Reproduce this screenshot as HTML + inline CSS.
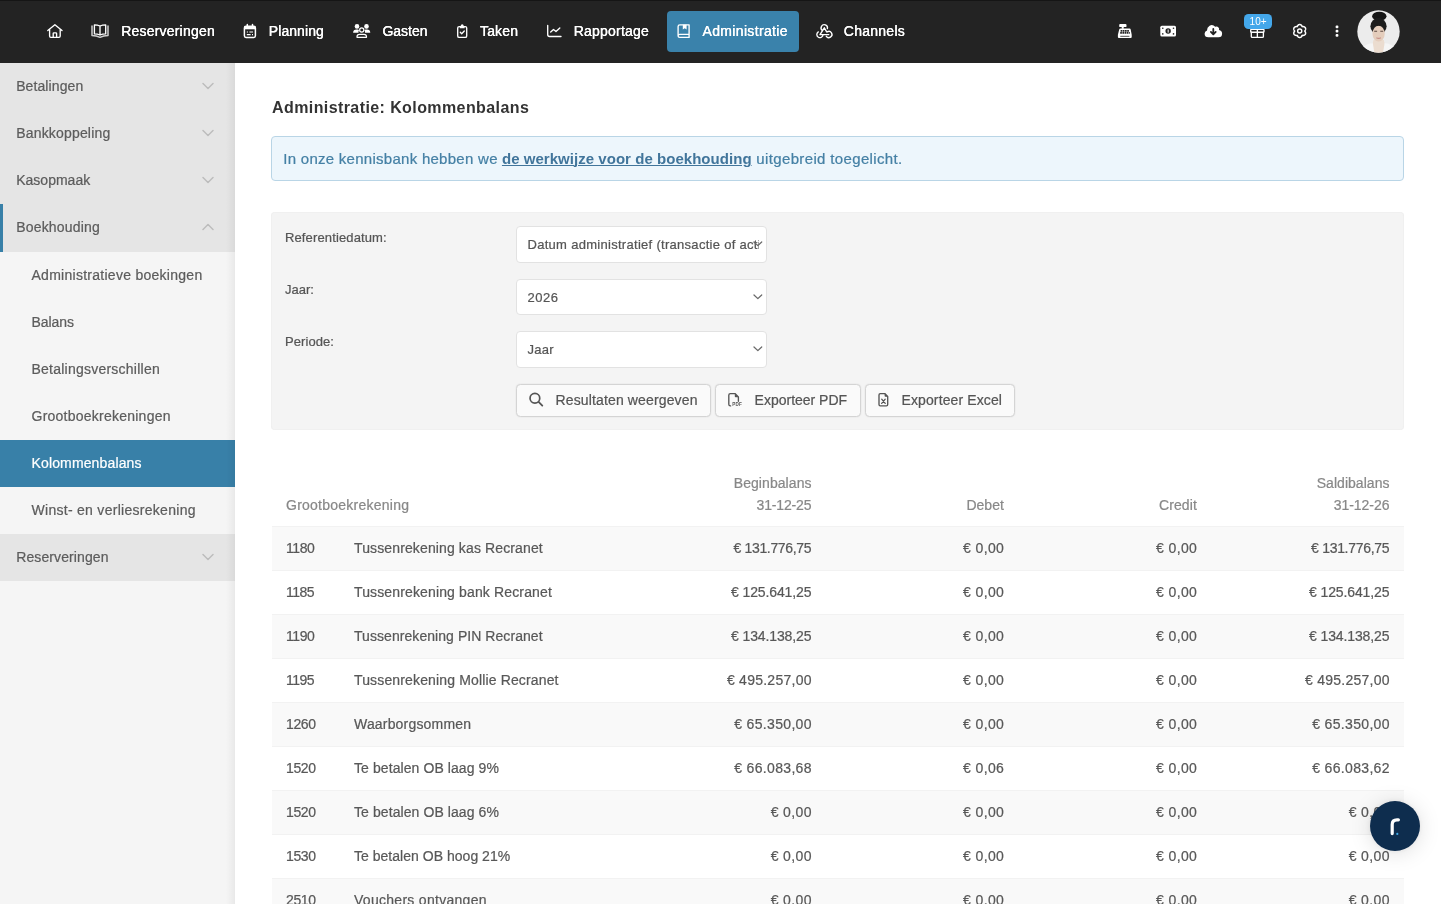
<!DOCTYPE html>
<html lang="nl"><head><meta charset="utf-8"><title>Administratie: Kolommenbalans</title>
<style>
*{box-sizing:border-box}
html,body{margin:0;padding:0}
body{width:1441px;height:904px;overflow:hidden;background:#fff;font-family:"Liberation Sans",sans-serif;font-size:14px;color:#555;position:relative;-webkit-text-stroke:.22px}
#wrap{position:absolute;left:0;top:0;width:1441px;height:904px;overflow:hidden;will-change:transform}
a{color:inherit}
.abs{position:absolute}
/* top bar */
#top{position:absolute;left:0;top:0;width:1441px;height:62.5px;background:#232323;box-shadow:inset 0 1px 0 #151515;z-index:5}
#top .ni{position:absolute;top:0;height:62.5px;line-height:63.5px;color:#fff;font-size:14px;white-space:nowrap;text-shadow:0 0 .4px #fff}
#top svg{position:absolute;overflow:visible}
#top .btn{position:absolute;left:667px;top:10.5px;width:131.5px;height:41.5px;border-radius:4px;background:#3a82ab}
/* sidebar */
#side{position:absolute;left:0;top:62.5px;width:235px;height:841.5px;background:#f5f5f5;overflow:hidden}
#side:after{content:"";position:absolute;right:0;top:0;width:9px;height:100%;background:linear-gradient(to right,rgba(0,0,0,0),rgba(0,0,0,.05))}
#side ul{list-style:none;margin:0;padding:.45px 0 0;background:linear-gradient(#e5e5e5,#e5e5e5) 0 0/100% 2px no-repeat}
#side li{position:relative;height:47.15px;line-height:47.15px;white-space:nowrap;color:#5c5c5c}
#side li.m{background:#e5e5e5;padding-left:16.2px}
#side li.s{padding-left:31.5px}
#side li.act{background:#3880a8;color:#fff}
#side li.open{border-left:3px solid #3880a8;padding-left:13.2px}
#side li svg{position:absolute;left:201.8px;top:18.8px}
#side li.open svg{left:198.8px;top:18.3px}
/* main */
#main{display:block}
h1{position:absolute;left:272px;top:95.8px;margin:0;font-size:16px;line-height:24px;font-weight:700;color:#333;white-space:nowrap;-webkit-text-stroke:0}
#alert{position:absolute;left:271.1px;top:136px;width:1133px;height:45px;border:1px solid #b9d5e6;border-radius:4px;background:#edf6fc;color:#4580a5;font-size:15px;line-height:43px;padding-left:11.2px;white-space:nowrap}
#alert a{-webkit-text-stroke:0;color:#41759b;font-weight:700;text-decoration:underline;text-decoration-thickness:1.1px;text-underline-offset:1px}
#filter{position:absolute;left:271.1px;top:212px;width:1133px;height:217.5px;border-radius:4px;background:#f4f4f4;box-shadow:inset 0 0 0 1px #f0f0f0}
#filter label{position:absolute;left:13.9px;font-size:13px;line-height:20px;color:#555;white-space:nowrap}
.sel{position:absolute;left:244.9px;width:251.5px;height:36.5px;border:1px solid #e2e2e2;border-radius:4px;background:#fff;font-size:13px;line-height:36px;padding-left:10.5px;color:#555;white-space:nowrap;overflow:hidden}
.sel svg{position:absolute;right:3.6px;top:14.4px}
.sel .clip{display:inline-block;overflow:hidden;width:231.5px;height:34px;vertical-align:top}
.bt{position:absolute;top:171.5px;height:33px;border:1px solid #d4d4d4;border-radius:4.5px;background:#fafafa;box-shadow:0 0 1.5px rgba(0,0,0,.12);font-size:14px;line-height:31px;color:#555;white-space:nowrap}
.bt svg{position:absolute;overflow:visible}
.bt span.t{position:absolute;top:0}
/* table */
#tbl{position:absolute;left:272px;top:460px;width:1132px;border-collapse:collapse;table-layout:fixed}
#tbl th{font-weight:400;color:#888;text-align:right;vertical-align:bottom;line-height:22px;padding:0 14.5px 9.8px 14px;height:66px;white-space:nowrap}
#tbl th:first-child{text-align:left}
#tbl td{height:44px;line-height:42.4px;padding:.6px 14.5px 0 14px;text-align:right;border-top:1px solid #f2f2f2;white-space:nowrap;color:#585858}
#tbl td:first-child,#tbl td:nth-child(2){text-align:left}
#tbl td:nth-child(2){padding-left:0}
#tbl tr:nth-child(odd) td{background:#f9f9f9}
#chat{position:absolute;left:1369.7px;top:800.7px;width:50.5px;height:50.5px;border-radius:50%;background:#0e2d4e;box-shadow:0 2px 22px rgba(0,0,0,.13),0 0 5px rgba(0,0,0,.07);z-index:9}
</style></head>
<body>
<div id="wrap">
<nav id="top"><div class="btn"></div><div class="ni" style="left:121.2px"><span style="letter-spacing:0.203px;">Reserveringen</span></div><div class="ni" style="left:268.8px"><span style="letter-spacing:0.071px;">Planning</span></div><div class="ni" style="left:382.5px"><span style="letter-spacing:-0.028px;">Gasten</span></div><div class="ni" style="left:480px"><span style="letter-spacing:0.16px;">Taken</span></div><div class="ni" style="left:573.8px"><span style="letter-spacing:0.203px;">Rapportage</span></div><div class="ni" style="left:702.5px"><span style="letter-spacing:0.34px;">Administratie</span></div><div class="ni" style="left:843.8px"><span style="letter-spacing:0.263px;">Channels</span></div><svg width="1441" height="62.5" viewBox="0 0 1441 62.5" style="left:0;top:0">
<!-- home -->
<g fill="none" stroke="#fff" stroke-width="1.35" stroke-linecap="round" stroke-linejoin="round"><path d="M47.8 30.6 L54.9 24.7 L62 30.6"/><path d="M49.6 29.6 V36 Q49.6 37.3 50.9 37.3 H58.9 Q60.2 37.3 60.2 36 V29.6"/><path d="M53.2 37.2 V33.6 Q53.2 32.9 53.9 32.9 H55.9 Q56.6 32.9 56.6 33.6 V37.2"/></g>
<!-- book open -->
<g fill="none" stroke-linejoin="round" stroke-linecap="round"><path d="M92 26 V35.4 Q96.5 35.6 100 37.3 Q103.500 35.6 108 35.400 V26" stroke="#cfcfcf" stroke-width="1.5"/><path d="M94.400 24.900 Q97.500 24.900 100 26 Q102.500 24.900 105.700 24.900 V33.900 Q102.500 33.900 100 35 Q97.500 33.900 94.400 33.900 Z M100 26 V35" stroke="#fff" stroke-width="1.35"/></g>
<!-- calendar -->
<g><rect x="244.400" y="26.300" width="11" height="11.100" rx="1.600" fill="none" stroke="#fff" stroke-width="1.500"/><rect x="244.400" y="26.300" width="11" height="3" fill="#fff"/><path d="M247.300 24.400 V27 M252.500 24.400 V27" stroke="#fff" stroke-width="1.500" stroke-linecap="round"/><path d="M246.800 32 H248 M249.400 32 H253 M246.800 34.600 H250.600 M252 34.600 H253" stroke="#fff" stroke-width="1.200"/></g>
<!-- users -->
<g><circle cx="357" cy="26.400" r="2.300" fill="#fff"/><circle cx="366.500" cy="26.400" r="2.300" fill="#fff"/><path d="M353.100 32.700 Q353.300 29.600 356.400 29.600 H357.600 Q358.700 29.600 359 30.300 Q358.200 31.400 358.500 32.700 Z" fill="#fff"/><path d="M370.300 32.700 Q370.100 29.600 367 29.600 H365.900 Q364.800 29.600 364.500 30.300 Q365.300 31.400 365 32.700 Z" fill="#fff"/><circle cx="361.750" cy="30" r="2.100" fill="none" stroke="#fff" stroke-width="1.200"/><path d="M357 37.300 V36.700 Q357 34.300 359.500 34.300 H364 Q366.500 34.300 366.500 36.700 V37.300 Z" fill="none" stroke="#fff" stroke-width="1.200" stroke-linejoin="round"/></g>
<!-- clipboard check -->
<g fill="none" stroke="#fff" stroke-width="1.35" stroke-linecap="round" stroke-linejoin="round"><rect x="457.700" y="26.600" width="9" height="10.800" rx="1.500"/><path d="M460.300 32.300 L461.700 33.700 L464.300 31"/></g><path d="M459.800 26 H460.600 Q460.900 24.300 462.200 24.300 Q463.500 24.300 463.800 26 H464.600 V28.300 H459.800 Z" fill="#fff"/>
<!-- chart line -->
<g fill="none" stroke="#fff" stroke-width="1.35" stroke-linecap="round" stroke-linejoin="round"><path d="M547.700 25.400 V34.600 Q547.700 36.500 549.600 36.500 H561"/><path d="M550.700 32 L553.500 29.400 L556 31.500 L559.800 27.900"/></g>
<!-- book bookmark (admin) -->
<g fill="none" stroke="#fff" stroke-width="1.35" stroke-linecap="round" stroke-linejoin="round"><path d="M678.100 35.600 V26.600 Q678.100 24.800 679.900 24.800 H689.100 V34.400 H679.700 Q678.100 34.400 678.100 36 Q678.100 37.400 679.700 37.400 H689.100 V34.400"/></g><path d="M682.800 24.800 H686.600 V29.600 L684.700 28.300 L682.800 29.600 Z" fill="#fff"/>
<!-- webhook -->
<g fill="none" stroke="#fff" stroke-width="1.35" stroke-linecap="round" stroke-linejoin="round"><path d="M822.300 30.400 A3.200 3.200 0 1 1 827.400 28.600"/><path d="M823 34.600 A3.100 3.100 0 1 1 818.300 31.900"/><path d="M827.200 31.900 A3.100 3.100 0 1 1 826.200 36.200"/><path d="M824.300 27.800 L820 34.600 H828.800 M824.300 27.800 L826.700 31.800"/></g>
<!-- cash register -->
<g><rect x="1119.200" y="24.100" width="7.300" height="3" rx="0.900" fill="#fff"/><rect x="1121.700" y="26.800" width="2" height="2" fill="#fff"/><path d="M1120.300 28.500 H1129.600 Q1130.500 28.500 1130.700 29.400 L1131.700 34.800 V37 Q1131.700 38 1130.700 38 H1118.900 Q1117.900 38 1117.900 37 V34.800 L1119.200 29.400 Q1119.400 28.500 1120.300 28.500Z" fill="#fff"/><path d="M1120.600 30.900 H1129.400 M1120.200 32.900 H1129.800" stroke="#232323" stroke-width="1.600" stroke-dasharray="1.700 0.500"/><path d="M1120.300 36.300 H1129.400" stroke="#232323" stroke-width="0.800"/></g>
<!-- money bill -->
<g><rect x="1160.300" y="25.700" width="15.700" height="10.700" rx="1.500" fill="#fff"/><circle cx="1168.150" cy="31.050" r="2.700" fill="#232323"/><rect x="1167.650" y="29.500" width="1" height="3.100" fill="#fff"/><circle cx="1162.800" cy="28.200" r="0.800" fill="#232323"/><circle cx="1173.500" cy="28.200" r="0.800" fill="#232323"/><circle cx="1162.800" cy="33.900" r="0.800" fill="#232323"/><circle cx="1173.500" cy="33.900" r="0.800" fill="#232323"/></g>
<!-- cloud download -->
<g><path d="M1208.400 37.200 Q1204.600 37.200 1204.600 33.700 Q1204.600 31.200 1207 30.400 Q1206.900 27.300 1209.600 25.700 Q1212.700 24 1215.200 26.800 Q1217.800 25.500 1219 28.300 Q1219.300 29.100 1219 30.100 Q1222.100 30.700 1222.100 33.700 Q1222.100 37.200 1218.500 37.200 Z" fill="#fff"/><path d="M1213.300 29 V33.600 M1210.900 31.900 L1213.300 34.300 L1215.700 31.900" fill="none" stroke="#232323" stroke-width="1.800" stroke-linecap="round" stroke-linejoin="round"/></g>
<!-- gift -->
<g fill="none" stroke="#fff" stroke-width="1.35" stroke-linecap="round" stroke-linejoin="round"><path d="M1251.300 32.200 V36.500 Q1251.300 37.400 1252.200 37.400 H1262.500 Q1263.400 37.400 1263.400 36.500 V32.200"/><rect x="1250.700" y="29.300" width="13.300" height="2.900" rx="0.700"/><path d="M1257.350 29.300 V37.400"/></g>
<!-- gear -->
<path d="M1304.75 31.00 L1304.93 30.73 L1305.12 30.43 L1305.29 30.11 L1305.43 29.78 L1305.53 29.44 L1305.60 29.08 L1305.61 28.73 L1305.57 28.39 L1305.47 28.06 L1305.33 27.75 L1305.13 27.47 L1304.90 27.23 L1304.62 27.02 L1304.31 26.85 L1303.97 26.73 L1303.62 26.65 L1303.26 26.60 L1302.90 26.59 L1302.55 26.61 L1302.23 26.63 L1302.08 26.33 L1301.92 26.02 L1301.73 25.72 L1301.51 25.43 L1301.26 25.17 L1300.99 24.94 L1300.69 24.75 L1300.37 24.61 L1300.04 24.53 L1299.70 24.50 L1299.36 24.53 L1299.03 24.61 L1298.71 24.75 L1298.41 24.94 L1298.14 25.17 L1297.89 25.43 L1297.67 25.72 L1297.48 26.02 L1297.32 26.33 L1297.17 26.63 L1296.85 26.61 L1296.50 26.59 L1296.14 26.60 L1295.78 26.65 L1295.43 26.73 L1295.09 26.85 L1294.78 27.02 L1294.50 27.23 L1294.27 27.47 L1294.07 27.75 L1293.93 28.06 L1293.83 28.39 L1293.79 28.73 L1293.80 29.08 L1293.87 29.44 L1293.97 29.78 L1294.11 30.11 L1294.28 30.43 L1294.47 30.73 L1294.65 31.00 L1294.47 31.27 L1294.28 31.57 L1294.11 31.89 L1293.97 32.22 L1293.87 32.56 L1293.80 32.92 L1293.79 33.27 L1293.83 33.61 L1293.93 33.94 L1294.07 34.25 L1294.27 34.53 L1294.50 34.77 L1294.78 34.98 L1295.09 35.15 L1295.43 35.27 L1295.78 35.35 L1296.14 35.40 L1296.50 35.41 L1296.85 35.39 L1297.17 35.37 L1297.32 35.67 L1297.48 35.98 L1297.67 36.28 L1297.89 36.57 L1298.14 36.83 L1298.41 37.06 L1298.71 37.25 L1299.03 37.39 L1299.36 37.47 L1299.70 37.50 L1300.04 37.47 L1300.37 37.39 L1300.69 37.25 L1300.99 37.06 L1301.26 36.83 L1301.51 36.57 L1301.73 36.28 L1301.92 35.98 L1302.08 35.67 L1302.23 35.37 L1302.55 35.39 L1302.90 35.41 L1303.26 35.40 L1303.62 35.35 L1303.97 35.27 L1304.31 35.15 L1304.62 34.98 L1304.90 34.77 L1305.13 34.53 L1305.33 34.25 L1305.47 33.94 L1305.57 33.61 L1305.61 33.27 L1305.60 32.92 L1305.53 32.56 L1305.43 32.22 L1305.29 31.89 L1305.12 31.57 L1304.93 31.27Z" fill="none" stroke="#fff" stroke-width="1.5" stroke-linejoin="round"/><circle cx="1299.7" cy="31" r="2.05" fill="none" stroke="#fff" stroke-width="1.45"/>
<!-- dots -->
<rect x="1335.600" y="25.500" width="2.800" height="2.800" rx="1" fill="#fff"/><rect x="1335.600" y="29.700" width="2.800" height="2.800" rx="1" fill="#fff"/><rect x="1335.600" y="33.900" width="2.800" height="2.800" rx="1" fill="#fff"/>
</svg><svg width="43" height="43" viewBox="0 0 43 43" style="left:1356.700px;top:9.700px">
<defs><clipPath id="avc"><circle cx="21.500" cy="21.500" r="21.200"/></clipPath><filter id="avb" x="-20%" y="-20%" width="140%" height="140%"><feGaussianBlur stdDeviation="0.600"/></filter></defs>
<circle cx="21.500" cy="21.500" r="21.200" fill="#ececec"/>
<g clip-path="url(#avc)" filter="url(#avb)">
<path d="M16.500 30 L13.200 45 H30.200 L26.800 30 Z" fill="#ebdccf"/>
<path d="M1 46 Q3 35.500 13 33.600 L15.800 33.200 L17.800 45 Z" fill="#f5f5f5"/>
<path d="M42 46 Q40 35.500 30.500 33.600 L27.600 33.200 L25.600 45 Z" fill="#f5f5f5"/>
<ellipse cx="22.300" cy="6.300" rx="7.200" ry="4.500" fill="#171717"/>
<ellipse cx="21.500" cy="16.200" rx="8.100" ry="8.200" fill="#1c1c1c"/>
<ellipse cx="21.600" cy="23.700" rx="6.100" ry="7.900" fill="#e4cdbc"/>
<path d="M14.300 18 Q16.500 11.800 22 12.200 Q27.500 12.500 29 18.500 Q25.500 15.200 21.800 15.600 Q17.500 15.400 14.300 18Z" fill="#1c1c1c"/>
<path d="M17.200 21.300 h2.900 M23.300 21.300 h2.900" stroke="#5d4b42" stroke-width="1.100"/>
<path d="M19.400 27.700 Q21.600 29 23.900 27.700" stroke="#c58f86" stroke-width="1.100" fill="none"/>
</g></svg><div style="position:absolute;left:1243.800px;top:14.100px;width:28.600px;height:14.900px;border-radius:4.500px;background:#44a7ea;color:#fff;font-size:10px;line-height:15.800px;text-align:center;letter-spacing:0;-webkit-text-stroke:0">10+</div></nav>
<aside id="side"><ul><li class="m"><span style="letter-spacing:0.092px;">Betalingen</span><svg width="12" height="8" viewBox="0 0 12 8"><path d="M1 1.5 L6 6.5 L11 1.5" fill="none" stroke="#bcbcbc" stroke-width="1.45" stroke-linecap="round" stroke-linejoin="round"/></svg></li><li class="m"><span style="letter-spacing:0.178px;">Bankkoppeling</span><svg width="12" height="8" viewBox="0 0 12 8"><path d="M1 1.5 L6 6.5 L11 1.5" fill="none" stroke="#bcbcbc" stroke-width="1.45" stroke-linecap="round" stroke-linejoin="round"/></svg></li><li class="m"><span style="letter-spacing:0.008px;">Kasopmaak</span><svg width="12" height="8" viewBox="0 0 12 8"><path d="M1 1.5 L6 6.5 L11 1.5" fill="none" stroke="#bcbcbc" stroke-width="1.45" stroke-linecap="round" stroke-linejoin="round"/></svg></li><li class="m open"><span style="letter-spacing:0.185px;">Boekhouding</span><svg width="12" height="8" viewBox="0 0 12 8"><path d="M1 6.5 L6 1.5 L11 6.5" fill="none" stroke="#bcbcbc" stroke-width="1.45" stroke-linecap="round" stroke-linejoin="round"/></svg></li><li class="s"><span style="letter-spacing:0.27px;">Administratieve boekingen</span></li><li class="s"><span style="letter-spacing:-0.062px;">Balans</span></li><li class="s"><span style="letter-spacing:0.235px;">Betalingsverschillen</span></li><li class="s"><span style="letter-spacing:0.241px;">Grootboekrekeningen</span></li><li class="s act"><span style="letter-spacing:0.141px;">Kolommenbalans</span></li><li class="s"><span style="letter-spacing:0.285px;">Winst- en verliesrekening</span></li><li class="m"><span style="letter-spacing:0.103px;">Reserveringen</span><svg width="12" height="8" viewBox="0 0 12 8"><path d="M1 1.5 L6 6.5 L11 1.5" fill="none" stroke="#bcbcbc" stroke-width="1.45" stroke-linecap="round" stroke-linejoin="round"/></svg></li></ul></aside>
<main id="main">
<h1><span style="letter-spacing:0.408px;">Administratie: Kolommenbalans</span></h1><div id="alert"><span style="letter-spacing:0.273px;">In onze kennisbank hebben we</span><a style="margin-left:4.2px;display:inline-block"><span style="letter-spacing:0.04px;margin-right:-0.04px;">de werkwijze voor de boekhouding</span></a><span style="margin-left:4.8px"><span style="letter-spacing:0.355px;">uitgebreid toegelicht.</span></span></div>
<section id="filter"><label style="top:15.8px"><span style="letter-spacing:0.131px;">Referentiedatum:</span></label><label style="top:68.1px"><span style="letter-spacing:0.023px;">Jaar:</span></label><label style="top:120.3px"><span style="letter-spacing:0.083px;">Periode:</span></label><div class="sel" style="top:14px"><span class="clip"><span style="letter-spacing:0px;letter-spacing:.29px">Datum administratief (transactie of actie)</span></span><svg width="10" height="6" viewBox="0 0 10 6"><path d="M1 1 L4.85 4.6 L8.7 1" fill="none" stroke="#6a6a6a" stroke-width="1.3" stroke-linecap="round" stroke-linejoin="round"/></svg></div><div class="sel" style="top:66.5px"><span style="letter-spacing:0.526px;">2026</span><svg width="10" height="6" viewBox="0 0 10 6"><path d="M1 1 L4.85 4.6 L8.7 1" fill="none" stroke="#6a6a6a" stroke-width="1.3" stroke-linecap="round" stroke-linejoin="round"/></svg></div><div class="sel" style="top:119px"><span style="letter-spacing:0.234px;">Jaar</span><svg width="10" height="6" viewBox="0 0 10 6"><path d="M1 1 L4.85 4.6 L8.7 1" fill="none" stroke="#6a6a6a" stroke-width="1.3" stroke-linecap="round" stroke-linejoin="round"/></svg></div><div class="bt" style="left:244.9px;width:195.2px"><span class="t" style="left:38.5px"><span style="letter-spacing:0.141px;">Resultaten weergeven</span></span></div><div class="bt" style="left:444px;width:145.6px"><span class="t" style="left:38.5px"><span style="letter-spacing:-0.008px;">Exporteer PDF</span></span></div><div class="bt" style="left:593.6px;width:150px"><span class="t" style="left:35.8px"><span style="letter-spacing:0.119px;">Exporteer Excel</span></span></div><svg width="1441" height="904" viewBox="0 0 1441 904" style="position:absolute;left:-271.100px;top:-212px;pointer-events:none">
<g fill="none" stroke="#555" stroke-linecap="round" stroke-linejoin="round">
<circle cx="534.900" cy="398.200" r="4.850" stroke-width="1.700"/><path d="M538.600 401.900 L542.300 405.600" stroke-width="1.800"/>
<path d="M730.600 405.900 H730.400 Q728.800 405.900 728.800 404.300 V395.200 Q728.800 393.600 730.400 393.600 H735 L738.400 397 V401.300" stroke-width="1.350"/>
<path d="M879 394.900 Q879 393.600 880.300 393.600 H884.800 L887.700 396.500 V404.600 Q887.700 405.900 886.400 405.900 H880.300 Q879 405.900 879 404.600 Z" stroke-width="1.350"/>
<path d="M881.700 399.200 L885.200 403.400 M885.200 399.200 L881.700 403.400" stroke-width="1.300"/>
</g>
<path d="M734.800 393.400 L738.600 397.200 H735.600 Q734.800 397.200 734.800 396.400 Z" fill="#555"/>
<path d="M884.600 393.400 L887.900 396.700 H885.400 Q884.600 396.700 884.600 395.900 Z" fill="#555"/>
<text x="732.300" y="406" font-family="Liberation Sans, sans-serif" font-size="4.600" font-weight="700" fill="#555" letter-spacing="0.200">PDF</text>
</svg></section>
<table id="tbl"><colgroup><col style="width:82px"><col style="width:287px"><col style="width:185px"><col style="width:192.400px"><col style="width:193px"><col style="width:192.600px"></colgroup><thead><tr><th colspan="2"><span style="letter-spacing:0.245px;">Grootboekrekening</span></th><th><span style="letter-spacing:0.069px;margin-right:-0.069px;">Beginbalans</span><br><span style="letter-spacing:-0.15px;margin-right:0.15px;">31-12-25</span></th><th><span style="letter-spacing:0.035px;margin-right:-0.035px;">Debet</span></th><th><span style="letter-spacing:0.128px;margin-right:-0.128px;">Credit</span></th><th><span style="letter-spacing:0.036px;margin-right:-0.036px;">Saldibalans</span><br><span style="letter-spacing:-0.042px;margin-right:0.042px;">31-12-26</span></th></tr></thead><tbody><tr><td><span style="letter-spacing:-0.436px;">1180</span></td><td><span style="letter-spacing:0.126px;">Tussenrekening kas Recranet</span></td><td><span style="letter-spacing:-0.341px;margin-right:0.341px;">€ 131.776,75</span></td><td><span style="letter-spacing:0.372px;margin-right:-0.372px;">€ 0,00</span></td><td><span style="letter-spacing:0.372px;margin-right:-0.372px;">€ 0,00</span></td><td><span style="letter-spacing:-0.305px;margin-right:0.305px;">€ 131.776,75</span></td></tr><tr><td><span style="letter-spacing:-0.503px;">1185</span></td><td><span style="letter-spacing:0.139px;">Tussenrekening bank Recranet</span></td><td><span style="letter-spacing:-0.123px;margin-right:0.123px;">€ 125.641,25</span></td><td><span style="letter-spacing:0.372px;margin-right:-0.372px;">€ 0,00</span></td><td><span style="letter-spacing:0.372px;margin-right:-0.372px;">€ 0,00</span></td><td><span style="letter-spacing:-0.123px;margin-right:0.123px;">€ 125.641,25</span></td></tr><tr><td><span style="letter-spacing:-0.436px;">1190</span></td><td><span style="letter-spacing:0.06px;">Tussenrekening PIN Recranet</span></td><td><span style="letter-spacing:-0.123px;margin-right:0.123px;">€ 134.138,25</span></td><td><span style="letter-spacing:0.372px;margin-right:-0.372px;">€ 0,00</span></td><td><span style="letter-spacing:0.372px;margin-right:-0.372px;">€ 0,00</span></td><td><span style="letter-spacing:-0.123px;margin-right:0.123px;">€ 134.138,25</span></td></tr><tr><td><span style="letter-spacing:-0.503px;">1195</span></td><td><span style="letter-spacing:0.147px;">Tussenrekening Mollie Recranet</span></td><td><span style="letter-spacing:0.259px;margin-right:-0.259px;">€ 495.257,00</span></td><td><span style="letter-spacing:0.372px;margin-right:-0.372px;">€ 0,00</span></td><td><span style="letter-spacing:0.372px;margin-right:-0.372px;">€ 0,00</span></td><td><span style="letter-spacing:0.241px;margin-right:-0.241px;">€ 495.257,00</span></td></tr><tr><td><span style="letter-spacing:-0.385px;">1260</span></td><td><span style="letter-spacing:0.181px;">Waarborgsommen</span></td><td><span style="letter-spacing:0.323px;margin-right:-0.323px;">€ 65.350,00</span></td><td><span style="letter-spacing:0.372px;margin-right:-0.372px;">€ 0,00</span></td><td><span style="letter-spacing:0.372px;margin-right:-0.372px;">€ 0,00</span></td><td><span style="letter-spacing:0.323px;margin-right:-0.323px;">€ 65.350,00</span></td></tr><tr><td><span style="letter-spacing:-0.385px;">1520</span></td><td><span style="letter-spacing:0.084px;">Te betalen OB laag 9%</span></td><td><span style="letter-spacing:0.323px;margin-right:-0.323px;">€ 66.083,68</span></td><td><span style="letter-spacing:0.372px;margin-right:-0.372px;">€ 0,06</span></td><td><span style="letter-spacing:0.372px;margin-right:-0.372px;">€ 0,00</span></td><td><span style="letter-spacing:0.323px;margin-right:-0.323px;">€ 66.083,62</span></td></tr><tr><td><span style="letter-spacing:-0.385px;">1520</span></td><td><span style="letter-spacing:0.084px;">Te betalen OB laag 6%</span></td><td><span style="letter-spacing:0.372px;margin-right:-0.372px;">€ 0,00</span></td><td><span style="letter-spacing:0.372px;margin-right:-0.372px;">€ 0,00</span></td><td><span style="letter-spacing:0.372px;margin-right:-0.372px;">€ 0,00</span></td><td><span style="letter-spacing:0.372px;margin-right:-0.372px;">€ 0,00</span></td></tr><tr><td><span style="letter-spacing:-0.385px;">1530</span></td><td><span style="letter-spacing:0.025px;">Te betalen OB hoog 21%</span></td><td><span style="letter-spacing:0.372px;margin-right:-0.372px;">€ 0,00</span></td><td><span style="letter-spacing:0.372px;margin-right:-0.372px;">€ 0,00</span></td><td><span style="letter-spacing:0.372px;margin-right:-0.372px;">€ 0,00</span></td><td><span style="letter-spacing:0.372px;margin-right:-0.372px;">€ 0,00</span></td></tr><tr><td><span style="letter-spacing:-0.385px;">2510</span></td><td><span style="letter-spacing:0.285px;">Vouchers ontvangen</span></td><td><span style="letter-spacing:0.372px;margin-right:-0.372px;">€ 0,00</span></td><td><span style="letter-spacing:0.372px;margin-right:-0.372px;">€ 0,00</span></td><td><span style="letter-spacing:0.372px;margin-right:-0.372px;">€ 0,00</span></td><td><span style="letter-spacing:0.372px;margin-right:-0.372px;">€ 0,00</span></td></tr></tbody></table>
</main>
<div id="chat"><svg width="50.5" height="50.5" viewBox="0 0 50.5 50.5" style="position:absolute;left:0;top:0"><path d="M22.2 32.6 V23.6 Q22.2 18.8 27 18.8 H28.4" fill="none" stroke="#fff" stroke-width="3.2" stroke-linecap="round"/><circle cx="27.3" cy="32.9" r="1.1" fill="#3fa9e6"/></svg></div>
</div>
</body></html>
